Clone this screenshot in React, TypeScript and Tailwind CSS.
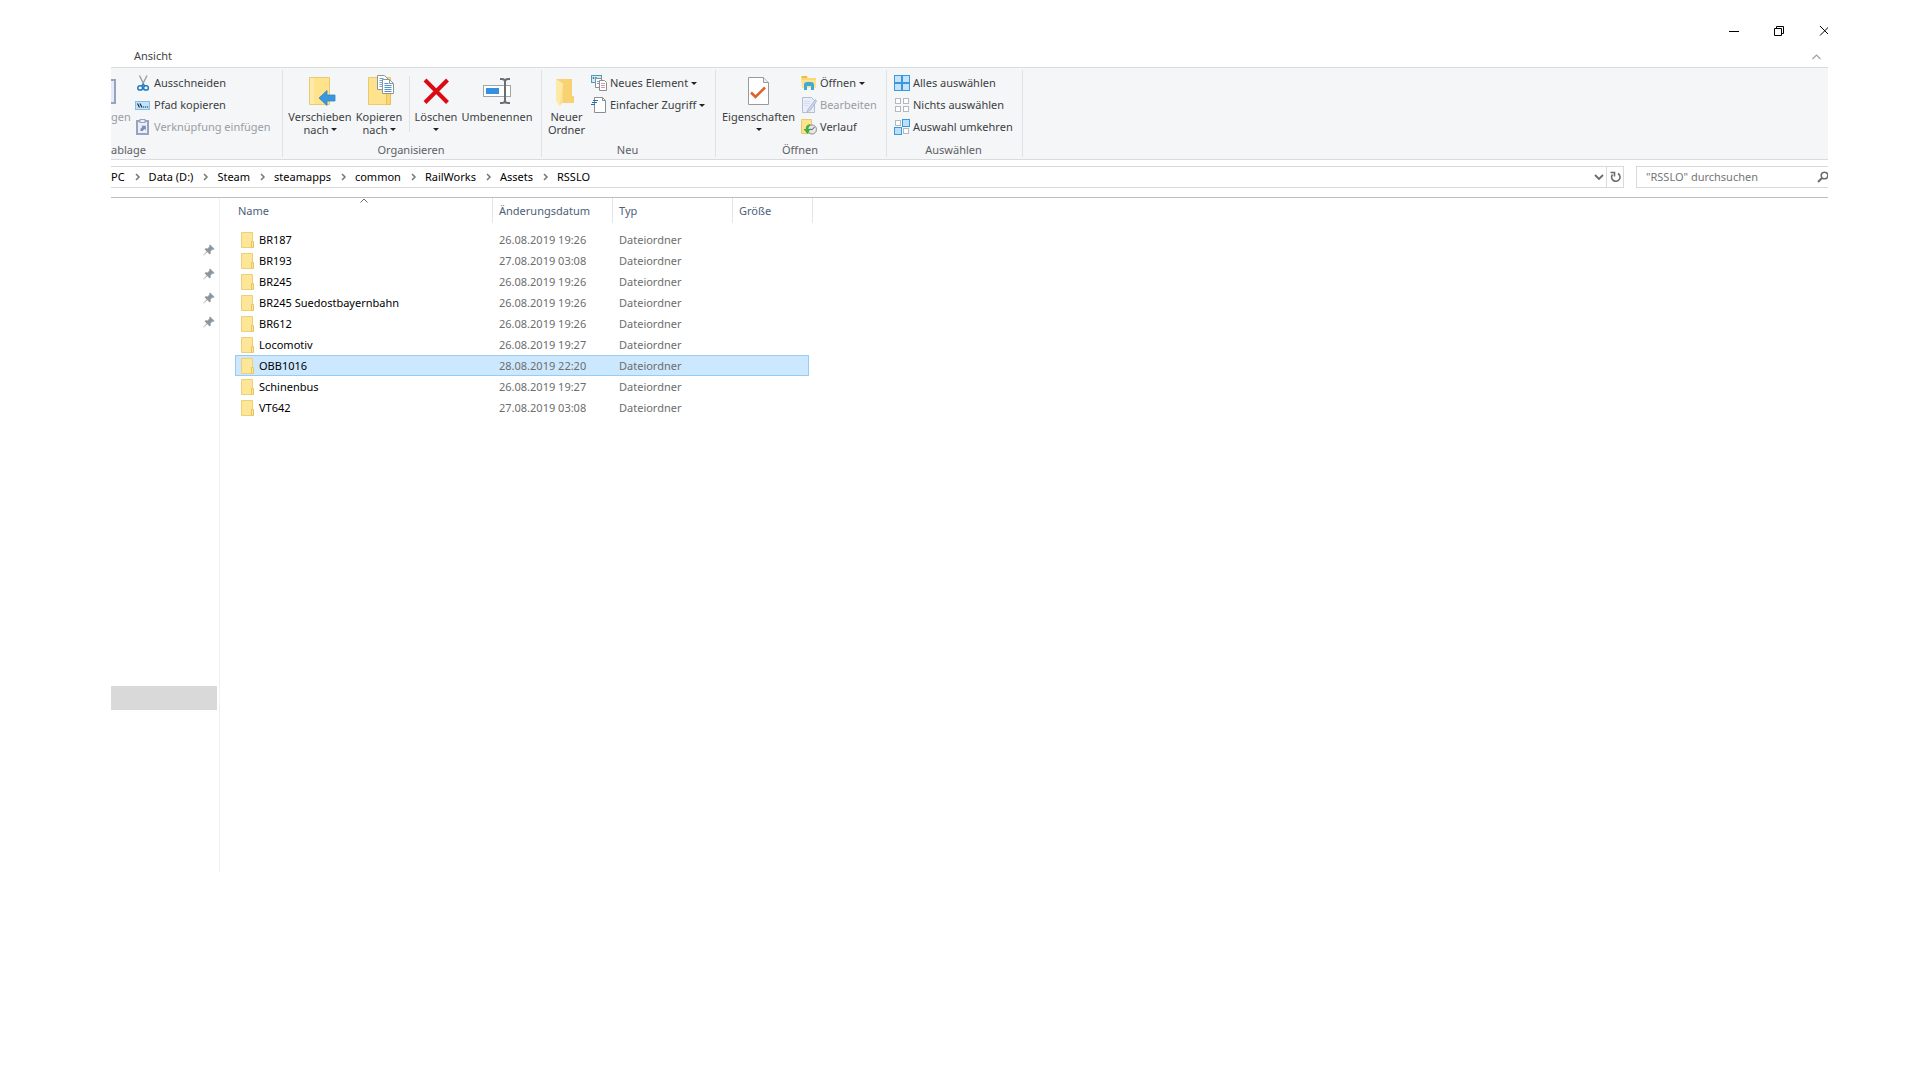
import React from 'react';

interface FolderEntry {
    name: string;
    modified: string;
    selected?: boolean;
}

const PATH = ['PC', 'Data (D:)', 'Steam', 'steamapps', 'common', 'RailWorks', 'Assets', 'RSSLO'];

const FOLDERS: FolderEntry[] = [
    { name: 'BR187', modified: '26.08.2019 19:26' },
    { name: 'BR193', modified: '27.08.2019 03:08' },
    { name: 'BR245', modified: '26.08.2019 19:26' },
    { name: 'BR245 Suedostbayernbahn', modified: '26.08.2019 19:26' },
    { name: 'BR612', modified: '26.08.2019 19:26' },
    { name: 'Locomotiv', modified: '26.08.2019 19:27' },
    { name: 'OBB1016', modified: '28.08.2019 22:20', selected: true },
    { name: 'Schinenbus', modified: '26.08.2019 19:27' },
    { name: 'VT642', modified: '27.08.2019 03:08' },
];

/* ---------- Icons ---------- */

const DropArrow: React.FC = () => (
    <svg width="6" height="3" viewBox="0 0 6 3" className="shrink-0"><path d="M0 0h6L3 3z" fill="#222" /></svg>
);

const CutIcon: React.FC = () => (
    <svg width="16" height="16" viewBox="0 0 16 16" fill="none">
        <path d="M4.5 0.5L9.6 11M12 0.5L6.8 11" stroke="#9a9fa5" strokeWidth="1.4" />
        <ellipse cx="5.2" cy="12.9" rx="2.4" ry="2.2" stroke="#1f7cc0" strokeWidth="1.5" />
        <ellipse cx="11" cy="12.9" rx="2.4" ry="2.2" stroke="#1f7cc0" strokeWidth="1.5" />
        <path d="M6.6 11.2l1.6-2 1.6 2" stroke="#1f7cc0" strokeWidth="1.3" />
    </svg>
);

const PathIcon: React.FC = () => (
    <svg width="16" height="16" viewBox="0 0 16 16" fill="none">
        <rect x="0.5" y="4.5" width="14" height="8" fill="#bfe3fb" stroke="#8dbbe0" />
        <path d="M2.5 6.5l2 4M5 6.5l2 4" stroke="#14304a" strokeWidth="1.2" />
        <path d="M8 10h1.2M10 10h1.2M12 10h1.2" stroke="#14304a" strokeWidth="1.2" />
    </svg>
);

const PasteLinkIcon: React.FC = () => (
    <svg width="16" height="16" viewBox="0 0 16 16" fill="none">
        <rect x="2" y="2" width="11" height="13" fill="#e9eef8" stroke="#98a3bd" strokeWidth="2" />
        <rect x="5" y="0.5" width="5" height="3" fill="#e9eef8" stroke="#98a3bd" />
        <path d="M5.5 12V9.8l2-1.8-1.3-1.2h4.6v4.4L9.4 9.9 7.6 12z" fill="#7c8bb0" />
    </svg>
);

const MoveIcon: React.FC = () => (
    <svg width="32" height="32" viewBox="0 0 32 32" fill="none">
        <path d="M5.5 3.5h20v27h-20z" fill="#fee28c" stroke="#e6ca74" />
        <path d="M6 4h4v26H6z" fill="#feeaa8" />
        <path d="M15 24l8-7.500v4.500h8v6h-8v4.500z" fill="#3b97dd" stroke="#2f85c8" strokeWidth="0.8" />
    </svg>
);

const CopyIcon: React.FC = () => (
    <svg width="32" height="32" viewBox="0 0 32 32" fill="none">
        <path d="M5.5 3.5h22v27h-22z" fill="#fee28c" stroke="#e6ca74" />
        <path d="M23.5 19.5h4v11h-4z" fill="#fbd66c" stroke="#e3c15e" />
        <path d="M14.5 1.500h7l4 4v10h-11z" fill="#fff" stroke="#8d949b" />
        <path d="M16.500 4.500h4M16.500 6.500h3M16.500 8.500h3M16.500 10.500h3M16.500 12.500h3" stroke="#6ba5d8" />
        <path d="M19.500 5.500h7l4 4v10h-11z" fill="#fff" stroke="#8d949b" />
        <path d="M26.500 5.500v4h4" stroke="#8d949b" />
        <path d="M21.500 9.500h4M21.500 11.500h7M21.500 13.500h7M21.500 15.500h7M21.500 17.500h7" stroke="#4f92cf" />
    </svg>
);

const DeleteIcon: React.FC = () => (
    <svg width="32" height="32" viewBox="0 0 32 32" fill="none">
        <path d="M5 6l22.500 22.500M27.500 6L5 28.500" stroke="#dc0a14" strokeWidth="4" />
    </svg>
);

const RenameIcon: React.FC = () => (
    <svg width="32" height="32" viewBox="0 0 32 32" fill="none">
        <rect x="2.500" y="11.500" width="27" height="11" fill="#fff" stroke="#a0a5aa" />
        <rect x="5" y="14" width="13" height="6" fill="#3591e0" />
        <path d="M24 6v22" stroke="#6a6e72" strokeWidth="2" />
        <path d="M19 5h2q3 0 3 2.500q0-2.500 3-2.500h2M19 29h2q3 0 3-2.500q0 2.500 3 2.500h2" stroke="#6a6e72" strokeWidth="2" />
    </svg>
);

const NewFolderIcon: React.FC = () => (
    <svg width="32" height="32" viewBox="0 0 32 32" fill="none">
        <path d="M5 5h16v17h2v7H10z" fill="#f8d272" />
        <path d="M5 5l7 4.500V27l-3.500 5L5 27z" fill="#fdeaa9" />
        <path d="M12 9.500V28l-3.500 4z" fill="#fbdf8d" />
    </svg>
);

const NewItemIcon: React.FC = () => (
    <svg width="16" height="16" viewBox="0 0 16 16" fill="none">
        <rect x="0.500" y="0.500" width="10" height="7" fill="#d4ecf8" stroke="#4f9bb8" />
        <path d="M2.500 2v2M5 2v3" stroke="#3f7ea0" strokeWidth="1.400" />
        <path d="M4.500 3.500h6v9h-6z" fill="#fff" stroke="#8a8f95" />
        <path d="M8.500 5.500h5l2 2v8h-7z" fill="#fff" stroke="#8a8f95" />
        <path d="M10 8.500h4M10 10.500h4M10 12.500h4" stroke="#d99a9a" />
        <path d="M6 6.500h2M6 8.500h2" stroke="#6ba5d8" />
    </svg>
);

const EasyAccessIcon: React.FC = () => (
    <svg width="16" height="16" viewBox="0 0 16 16" fill="none">
        <path d="M3.500 0.500h8l3 3v12h-11z" fill="#fff" stroke="#8a8f95" />
        <path d="M11.500 0.500v3h3" stroke="#8a8f95" />
        <path d="M2 3.500h5M1 5.500h5M0 7.500h4" stroke="#2a6eaf" strokeWidth="1.200" />
    </svg>
);

const PropertiesIcon: React.FC = () => (
    <svg width="32" height="32" viewBox="0 0 32 32" fill="none">
        <path d="M5.500 3.500h15l5 5v22h-20z" fill="#fff" stroke="#979ba0" />
        <path d="M20.500 3.500v5h5" fill="#eceeef" stroke="#979ba0" />
        <path d="M8 18.500l4.500 4.500 9.500-9.500" stroke="#e0602b" strokeWidth="2.600" />
    </svg>
);

const OpenIcon: React.FC = () => (
    <svg width="16" height="16" viewBox="0 0 16 16" fill="none">
        <path d="M0 1h6l1 2h8v10H1z" fill="#fbd871" />
        <path d="M1 1h5v2H1z" fill="#eebc3e" />
        <path d="M1 5h14v8H1z" fill="#fde495" />
        <path d="M3 15V10q0-3 3-3h4q3 0 3 3v5h-3v-4H6v4z" fill="#41a9d6" />
    </svg>
);

const EditIcon: React.FC = () => (
    <svg width="16" height="16" viewBox="0 0 16 16" fill="none">
        <path d="M1.500 0.500h9l3 3v12h-12z" fill="#e9eef9" stroke="#b3bdd4" />
        <path d="M3 4.500h6M3 6.500h6M3 8.500h4" stroke="#d5ddee" />
        <path d="M14.500 2.500l-7 9-1.500 3.500 3.500-1.800 6-9z" fill="#ccd6ea" stroke="#a0add0" strokeWidth="0.700" />
    </svg>
);

const HistoryIcon: React.FC = () => (
    <svg width="16" height="16" viewBox="0 0 16 16" fill="none">
        <path d="M0.500 0.500h10v14h-10z" fill="#fee28c" stroke="#e6ca74" />
        <circle cx="11" cy="10.500" r="4.500" fill="#e6e8ea" stroke="#8a8f95" />
        <path d="M13.500 8L11 10.800 8.800 10" stroke="#555" />
        <path d="M9 5Q4.500 6 4.800 10H2.500l4 5 3-5H7.300Q7.300 7 9.500 6z" fill="#3bb143" />
    </svg>
);

const SelectAllIcon: React.FC = () => (
    <svg width="16" height="16" viewBox="0 0 16 16" fill="none">
        <rect x="0.500" y="0.500" width="15" height="15" fill="#c3e4fc" stroke="#3d97d9" />
        <path d="M8 0v16M0 8h16" stroke="#3d97d9" strokeWidth="2" />
    </svg>
);

const SelectNoneIcon: React.FC = () => (
    <svg width="16" height="16" viewBox="0 0 16 16" fill="#fff" stroke="#b4b8bc">
        <rect x="1.500" y="1.500" width="5" height="5" /><rect x="9.500" y="1.500" width="5" height="5" />
        <rect x="1.500" y="9.500" width="5" height="5" /><rect x="9.500" y="9.500" width="5" height="5" />
    </svg>
);

const InvertIcon: React.FC = () => (
    <svg width="16" height="16" viewBox="0 0 16 16">
        <g fill="#fff" stroke="#b4b8bc"><rect x="1.500" y="1.500" width="5" height="5" /><rect x="9.500" y="9.500" width="5" height="5" /></g>
        <g fill="#b9dffb" stroke="#3d97d9"><rect x="8.500" y="0.500" width="7" height="7" /><rect x="0.500" y="8.500" width="7" height="7" /></g>
    </svg>
);

const PinIcon: React.FC = () => (
    <svg width="12" height="12" viewBox="0 0 12 12">
        <path d="M7 0.500L11.500 5l-1 .8-1-.3L7.500 7.500l.2 2-1 1L4.300 8 0.500 11.500 0.200 11.200 3.700 7.500 1.500 5.200l1-1 2 .3L6.500 2.500 6.200 1.300z" fill="#8d979f" />
    </svg>
);

const FolderIcon: React.FC = () => (
    <svg width="13" height="16" viewBox="0 0 13 16" fill="none" className="shrink-0">
        <path d="M0.500 0.500h11v15h-11z" fill="#fee698" stroke="#eccf78" />
        <path d="M10.500 9.500h2v6h-2z" fill="#fee698" stroke="#e8c65c" />
    </svg>
);

/* ---------- Ribbon ---------- */

const RibbonGroup: React.FC<{ label: string, className: string, labelClass?: string, children: React.ReactNode }> = ({ label, className, labelClass = 'pr-0.5 text-center', children }) => (
    <section aria-label={label} className={`flex shrink-0 flex-col pt-0.5 ${className}`}>
        <div className="flex h-[72px] items-start pt-0.5">{children}</div>
        <div className={`leading-4 text-[#5c6066] ${labelClass}`}>{label}</div>
    </section>
);

const BigButton: React.FC<{ icon: React.ReactNode, lines: string[], arrow?: boolean, className: string }> = ({ icon, lines, arrow, className }) => (
    <button type="button" className={`flex shrink-0 flex-col items-center pt-0.5 leading-[13px] whitespace-nowrap ${className}`}>
        {icon}
        <span className="pt-1">{lines[0]}</span>
        <span className="flex h-[13px] items-center gap-0.5">{lines[1]}{arrow && <DropArrow />}</span>
    </button>
);

const SmallButton: React.FC<{ icon: React.ReactNode, label: string, arrow?: boolean, disabled?: boolean }> = ({ icon, label, arrow, disabled }) => (
    <button type="button" disabled={disabled} className="flex h-[22px] items-center gap-[3px] whitespace-nowrap disabled:text-[#999da2]">
        {icon}
        <span>{label}</span>
        {arrow && <DropArrow />}
    </button>
);

const GroupDivider: React.FC = () => <div className="my-0.5 w-px shrink-0 bg-[#e0e2e4]" />;

const Ribbon: React.FC = () => (
    <div className="flex h-[93px] overflow-hidden border-y border-[#d9dbdd] bg-[#f5f6f7] text-[11px] text-[#3b3e42]">
        <RibbonGroup label="ablage" className="w-[171px]" labelClass="text-left">
            <button type="button" disabled className="flex w-6 shrink-0 flex-col items-start pt-0.5 leading-[13px] text-[#999da2]">
                <svg width="6" height="32" viewBox="0 0 6 32"><path d="M0 5h5v25H0v-2h3V7H0z" fill="#98a3bd" /><path d="M0 7h3v21H0z" fill="#e3ebf8" /></svg>
                <span className="pt-1">gen</span>
            </button>
            <div className="flex flex-col">
                <SmallButton icon={<CutIcon />} label="Ausschneiden" />
                <SmallButton icon={<PathIcon />} label="Pfad kopieren" />
                <SmallButton icon={<PasteLinkIcon />} label="Verknüpfung einfügen" disabled />
            </div>
        </RibbonGroup>
        <GroupDivider />
        <RibbonGroup label="Organisieren" className="w-[258px]">
            <BigButton icon={<MoveIcon />} lines={['Verschieben', 'nach']} arrow className="ml-0.5 w-[70px]" />
            <BigButton icon={<CopyIcon />} lines={['Kopieren', 'nach']} arrow className="w-12" />
            <div className="mr-[3px] ml-1.5 mt-1 h-14 w-px bg-[#e0e2e4]" />
            <BigButton icon={<DeleteIcon />} lines={['Löschen']} arrow className="w-[46px]" />
            <BigButton icon={<RenameIcon />} lines={['Umbenennen']} className="w-[76px]" />
        </RibbonGroup>
        <GroupDivider />
        <RibbonGroup label="Neu" className="w-[173px]">
            <BigButton icon={<NewFolderIcon />} lines={['Neuer', 'Ordner']} className="w-[49px]" />
            <div className="flex flex-col">
                <SmallButton icon={<NewItemIcon />} label="Neues Element" arrow />
                <SmallButton icon={<EasyAccessIcon />} label="Einfacher Zugriff" arrow />
            </div>
        </RibbonGroup>
        <GroupDivider />
        <RibbonGroup label="Öffnen" className="w-[170px]">
            <BigButton icon={<PropertiesIcon />} lines={['Eigenschaften']} arrow className="w-[85px]" />
            <div className="flex flex-col">
                <SmallButton icon={<OpenIcon />} label="Öffnen" arrow />
                <SmallButton icon={<EditIcon />} label="Bearbeiten" disabled />
                <SmallButton icon={<HistoryIcon />} label="Verlauf" />
            </div>
        </RibbonGroup>
        <GroupDivider />
        <RibbonGroup label="Auswählen" className="w-[135px]">
            <div className="flex flex-col pl-[7px]">
                <SmallButton icon={<SelectAllIcon />} label="Alles auswählen" />
                <SmallButton icon={<SelectNoneIcon />} label="Nichts auswählen" />
                <SmallButton icon={<InvertIcon />} label="Auswahl umkehren" />
            </div>
        </RibbonGroup>
        <GroupDivider />
    </div>
);

/* ---------- Title, address bar, list ---------- */

const TitleBar: React.FC = () => (
    <div className="flex h-[46px] items-end justify-end pb-2">
        <button type="button" aria-label="Minimieren" className="flex w-[45px] justify-center">
            <svg width="12" height="14" viewBox="0 0 12 14"><path d="M1 7.500h10" stroke="#000" /></svg>
        </button>
        <button type="button" aria-label="Verkleinern" className="flex w-[45px] justify-center">
            <svg width="12" height="14" viewBox="0 0 12 14" fill="none" stroke="#000"><path d="M1.500 4.500h7v7h-7zM3.500 4V2.500h7v7H9" /></svg>
        </button>
        <button type="button" aria-label="Schließen" className="flex w-[27px] justify-end">
            <svg width="9" height="14" viewBox="0 0 9 14"><path d="M1 2l9.500 9.500M10.500 2L1 11.500" stroke="#000" /></svg>
        </button>
    </div>
);

const AddressBar: React.FC = () => (
    <div className="flex h-[38px] items-start pt-1.5 text-[11px] text-black">
        <nav aria-label="Pfad" className="flex h-[22px] min-w-0 flex-1 items-center border border-l-0 border-[#d9d9d9]">
            {PATH.map((part, index) => (
                <React.Fragment key={part}>
                    {index > 0 && (
                        <svg width="24" height="8" viewBox="0 0 24 8" fill="none" className="shrink-0"><path d="M11 1l3 3-3 3" stroke="#777" strokeWidth="1.500" /></svg>
                    )}
                    <a href="#" className="whitespace-nowrap">{part}</a>
                </React.Fragment>
            ))}
            <button type="button" aria-label="Vorherige Orte" className="ml-auto flex h-full w-[15px] items-center justify-center">
                <svg width="10" height="8" viewBox="0 0 10 8" fill="none"><path d="M1 2l4 4 4-4" stroke="#6b6b6b" strokeWidth="1.800" /></svg>
            </button>
            <button type="button" aria-label="Aktualisieren" className="flex h-full w-[17px] items-center justify-center border-l border-[#d9d9d9]">
                <svg width="12" height="12" viewBox="0 0 12 12" fill="none" stroke="#6b6b6b" strokeWidth="1.600">
                    <path d="M9 2.500A4.200 4.200 0 1 1 3.500 3.500" /><path d="M1.500 1.500h4v4" />
                </svg>
            </button>
        </nav>
        <div className="ml-3 flex h-[22px] w-[192px] shrink-0 items-center border border-r-0 border-[#d9d9d9]">
            <input type="search" aria-label="RSSLO durchsuchen" placeholder={'"RSSLO" durchsuchen'} className="min-w-0 flex-1 pl-[9px] outline-none placeholder:text-[#757575]" />
            <svg width="11" height="12" viewBox="0 0 11 12" fill="none" stroke="#6b6b6b"><circle cx="7.500" cy="4.500" r="3.300" strokeWidth="1.600" /><path d="M5 7L1 11" strokeWidth="2" /></svg>
        </div>
    </div>
);

const Sidebar: React.FC = () => (
    <aside className="w-[109px] shrink-0 border-r border-[#f0f0f0] pt-10">
        {[0, 1, 2, 3].map(pin => (
            <div key={pin} className="flex h-6 items-center justify-end pr-1"><PinIcon /></div>
        ))}
        <div className="mt-[352px] mr-0.5 h-6 bg-[#d9d9d9]" />
    </aside>
);

const FileTable: React.FC = () => (
    <table className="ml-[15px] w-[578px] table-fixed border-separate border-spacing-0 self-start text-left text-[11px]">
        <colgroup>
            <col className="w-[258px]" /><col className="w-[120px]" /><col className="w-[120px]" /><col className="w-[76px]" /><col className="w-1" />
        </colgroup>
        <thead className="text-[#4c607a]">
            <tr className="h-[25px]">
                <th className="relative border-r border-[#e5e5e5] pt-0.5 pl-[3px] font-normal">
                    <svg width="8" height="5" viewBox="0 0 8 5" fill="none" className="absolute top-0 left-1/2 -translate-x-1/2"><path d="M0.500 4.500l3.500-3.500 3.500 3.500" stroke="#6b6b6b" /></svg>
                    Name
                </th>
                <th className="border-r border-[#e5e5e5] pt-0.5 pl-1.5 font-normal">Änderungsdatum</th>
                <th className="border-r border-[#e5e5e5] pt-0.5 pl-1.5 font-normal">Typ</th>
                <th className="pt-0.5 pl-1.5 font-normal">Größe</th>
                <td className="border-r border-[#e5e5e5]" />
            </tr>
        </thead>
        <tbody className="text-[#6d6d6d] before:block before:h-1.5">
            {FOLDERS.map(folder => {
                const cell = folder.selected ? 'border-y border-[#99ccf0] bg-[#cce8ff]' : 'border-y border-transparent';
                return (
                    <tr key={folder.name} className="h-[21px] leading-4" aria-selected={folder.selected}>
                        <td className={`${cell} border-l py-0 pl-[5px] text-black`}>
                            <div className="flex items-center gap-[5px]"><FolderIcon />{folder.name}</div>
                        </td>
                        <td className={`${cell} py-0 pl-1.5`}>{folder.modified}</td>
                        <td className={`${cell} py-0 pl-1.5`}>Dateiordner</td>
                        <td className={`${cell} border-r py-0`} />
                        <td className="p-0" />
                    </tr>
                );
            })}
        </tbody>
    </table>
);

const App: React.FC = () => {
    return (
        <div className="min-h-screen bg-white pr-[92px] pl-[111px] font-['Noto_Sans','Open_Sans',sans-serif]">
            <TitleBar />
            <div className="flex h-[21px] items-center justify-between pr-[7px] pl-[23px] text-[11px] text-[#444]">
                <button type="button">Ansicht</button>
                <button type="button" aria-label="Menüband minimieren">
                    <svg width="9" height="6" viewBox="0 0 9 6" fill="none"><path d="M0.500 5l4-4 4 4" stroke="#a0a0a0" strokeWidth="1.200" /></svg>
                </button>
            </div>
            <Ribbon />
            <AddressBar />
            <div className="-mt-px flex min-h-[675px] border-t border-[#bdbdbd]">
                <Sidebar />
                <FileTable />
            </div>
        </div>
    );
};

export default App;
